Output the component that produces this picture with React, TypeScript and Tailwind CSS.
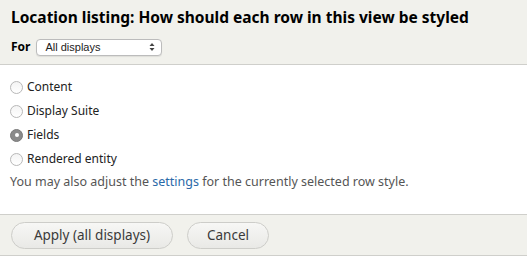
export default function App() {
  const options = [
    { label: 'Content', checked: false },
    { label: 'Display Suite', checked: false },
    { label: 'Fields', checked: true },
    { label: 'Rendered entity', checked: false },
  ];

  return (
    <div className="w-[527px] h-[257px] bg-white overflow-hidden font-['Noto_Sans',sans-serif] text-[#333]">
      {/* header */}
      <div className="h-[65px] bg-[#f1f1ec] border-b border-[#cfcfcb] px-[11px] pt-[6px]">
        <h1 className="text-[15.5px] font-bold text-black leading-[22px]">
          Location listing: How should each row in this view be styled
        </h1>
        <div className="flex items-center gap-[6px] mt-[10px]">
          <span className="text-[12px] font-bold text-black">For</span>
          <div className="w-[126px] h-[17px] bg-white border border-[#bcbcbc] rounded-[4px] flex items-center justify-between pl-[8px] pr-[6px] shadow-[0_1px_1px_rgba(0,0,0,0.08)]">
            <span className="text-[11px] text-[#222] font-['Liberation_Sans',sans-serif]">All displays</span>
            <svg width="6" height="10" viewBox="0 0 6 10">
              <path d="M3 1 L5.5 4 H0.5 Z" fill="#444" />
              <path d="M3 9 L5.5 6 H0.5 Z" fill="#444" />
            </svg>
          </div>
        </div>
      </div>

      {/* body */}
      <div className="h-[149px] px-[10px] pt-[13px]">
        <div className="flex flex-col gap-[6px]">
          {options.map((o) => (
            <label key={o.label} className="flex items-center gap-[4px] h-[18px]">
              {o.checked ? (
                <span className="w-[13px] h-[13px] rounded-full bg-[#8a8a8a] border border-[#7a7a7a] flex items-center justify-center">
                  <span className="w-[4px] h-[4px] rounded-full bg-white" />
                </span>
              ) : (
                <span className="w-[13px] h-[13px] rounded-full bg-gradient-to-b from-[#f4f4f4] to-white border border-[#b8b8b8]" />
              )}
              <span className="text-[12px] text-[#222]">{o.label}</span>
            </label>
          ))}
        </div>
        <p className="text-[12.5px] text-[#555] mt-[5px]">
          You may also adjust the <a className="text-[#2a69a8]">settings</a> for the currently selected row style.
        </p>
      </div>

      {/* footer */}
      <div className="h-[42px] bg-[#f1f1ec] border-t border-[#cfcfcb] border-b px-[11px] flex items-center gap-[14px]">
        <button className="h-[27px] w-[162px] rounded-[14px] border border-[#cdcdc9] bg-gradient-to-b from-[#f7f7f5] to-[#e9e9e6] text-[13.5px] text-[#3a3a3a]">
          Apply (all displays)
        </button>
        <button className="h-[27px] w-[82px] rounded-[14px] border border-[#cdcdc9] bg-gradient-to-b from-[#f7f7f5] to-[#e9e9e6] text-[13.5px] text-[#3a3a3a]">
          Cancel
        </button>
      </div>
    </div>
  );
}
